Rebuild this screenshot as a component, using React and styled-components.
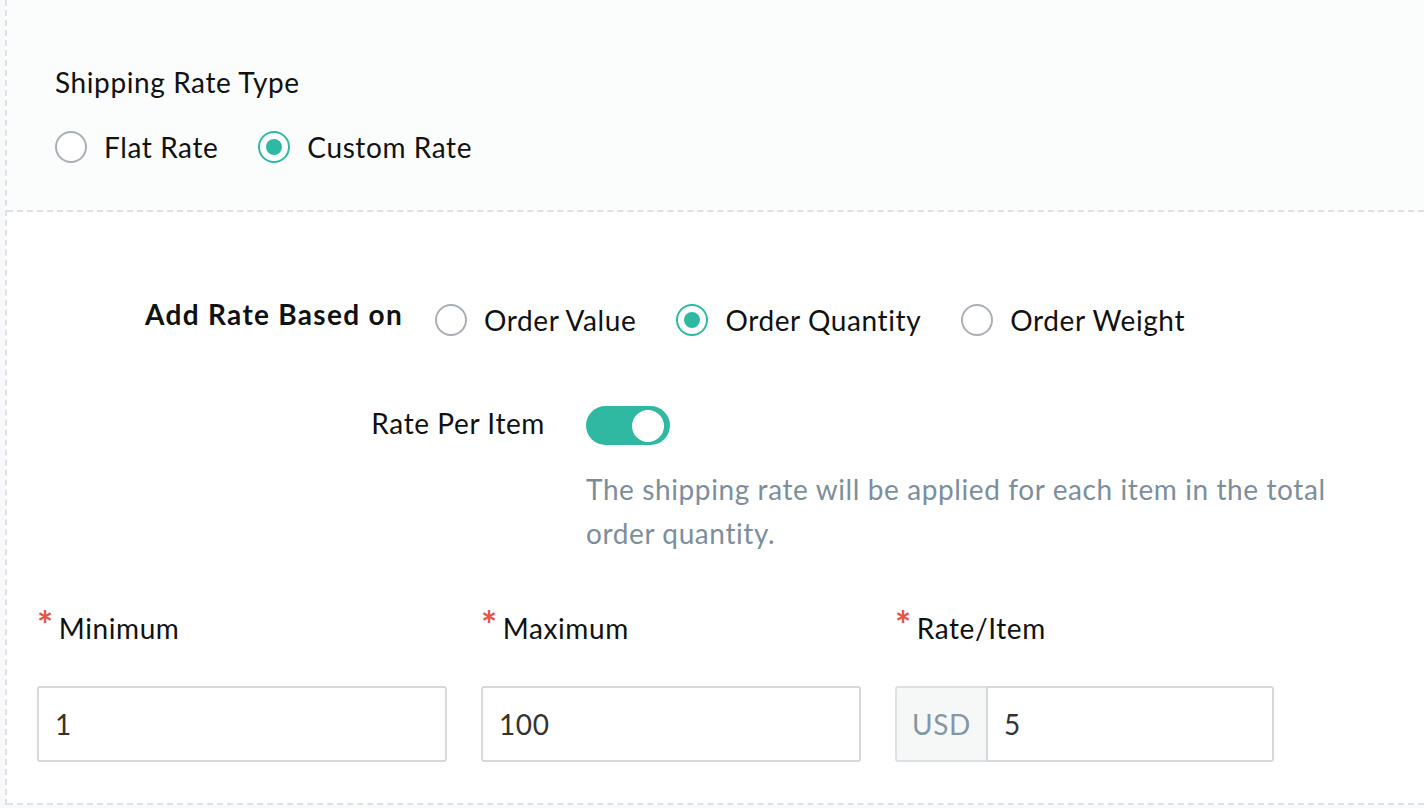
import React, { useState } from 'react'
import styled, { createGlobalStyle } from 'styled-components'

const GlobalStyle = createGlobalStyle`
  body {
    margin: 0;
    background: #f8f9fa;
    font-family: Lato, "Open Sans", sans-serif;
    letter-spacing: 0.6px;
    color: #111;
  }
`

const teal = '#2fb9a3'
const line = '#dde1e6'

const Frame = styled.div`
  margin-left: 5px;
  border-left: 2px dashed ${line};
  background: #fff;
`

const TypeSection = styled.section`
  background: #fbfdfc;
  padding: 62px 0 47px 48px;
  border-bottom: 2px dashed ${line};
`

const SectionTitle = styled.div`
  font-size: 28px;
  line-height: 40px;
  margin-bottom: 29px;
`

const RadioGroup = styled.div`
  display: flex;
  align-items: center;
  gap: ${p => p.$gap || 40}px;
`

const RadioLabel = styled.label`
  display: flex;
  align-items: center;
  gap: 17px;
  font-size: 28px;
  line-height: 32px;
  cursor: pointer;
`

const Circle = styled.span`
  width: 32px;
  height: 32px;
  box-sizing: border-box;
  border-radius: 50%;
  border: 2px solid ${p => (p.$on ? teal : '#a9aeb5')};
  background: #fff;
  display: flex;
  align-items: center;
  justify-content: center;
  &::after {
    content: '';
    width: 16px;
    height: 16px;
    border-radius: 50%;
    background: ${teal};
    display: ${p => (p.$on ? 'block' : 'none')};
  }
`

const RulesSection = styled.section`
  padding: 92px 0 41px 0;
  border-bottom: 2px dashed ${line};
`

const Row = styled.div`
  display: flex;
  align-items: flex-start;
  gap: ${p => p.$gap}px;
  margin-bottom: ${p => p.$mb || 0}px;
`

const RowLabel = styled.div`
  width: ${p => p.$w}px;
  flex: none;
  text-align: right;
  font-size: 28px;
  line-height: 34px;
  font-weight: ${p => (p.$bold ? 700 : 400)};
  letter-spacing: ${p => (p.$bold ? 1.3 : 0.6)}px;
  margin-top: ${p => p.$mt || 0}px;
`

const Column = styled.div`
  display: flex;
  flex-direction: column;
`

const Toggle = styled.button`
  width: 84px;
  height: 39px;
  border: none;
  border-radius: 20px;
  background: ${p => (p.$on ? teal : '#c8cdd2')};
  padding: 0;
  position: relative;
  cursor: pointer;
  &::after {
    content: '';
    position: absolute;
    top: 4px;
    left: ${p => (p.$on ? 46 : 6)}px;
    width: 32px;
    height: 32px;
    border-radius: 50%;
    background: #fff;
  }
`

const Hint = styled.p`
  margin: 22px 0 0;
  max-width: 770px;
  font-size: 28px;
  line-height: 44px;
  color: #7d8e9b;
`

const Fields = styled.div`
  display: flex;
  gap: 34px;
  padding-left: 30px;
  margin-top: 53px;
`

const Field = styled.div`
  display: flex;
  flex-direction: column;
  gap: 38px;
`

const FieldLabel = styled.div`
  display: flex;
  align-items: flex-start;
  gap: 5px;
  font-size: 28px;
  line-height: 40px;
  &::before {
    content: '*';
    color: #e5544b;
    font-size: 38px;
    font-weight: 700;
    line-height: 30px;
    margin-top: 1px;
  }
`

const InputWrap = styled.div`
  display: flex;
  width: ${p => p.$w}px;
  height: 76px;
`

const Addon = styled.div`
  width: 91px;
  box-sizing: border-box;
  display: flex;
  align-items: center;
  justify-content: center;
  background: #f6f8f8;
  border: 2px solid #dde1e5;
  border-right: none;
  border-radius: 3px 0 0 3px;
  color: #8597a5;
  font-size: 28px;
`

const Input = styled.input`
  flex: 1;
  min-width: 0;
  box-sizing: border-box;
  height: 100%;
  border: 2px solid #d5d9de;
  border-radius: ${p => (p.$addon ? '0 3px 3px 0' : '3px')};
  padding: 0 16px;
  font-family: inherit;
  letter-spacing: 0.6px;
  font-size: 28px;
  color: #333;
  outline: none;
  background: #fff;
`

function Radio({ checked, label, onChange }) {
  return (
    <RadioLabel onClick={onChange}>
      <Circle $on={checked} />
      {label}
    </RadioLabel>
  )
}

export default function App() {
  const [type, setType] = useState('custom')
  const [basis, setBasis] = useState('quantity')
  const [perItem, setPerItem] = useState(true)

  return (
    <>
      <GlobalStyle />
      <Frame>
        <TypeSection>
          <SectionTitle>Shipping Rate Type</SectionTitle>
          <RadioGroup $gap={40}>
            <Radio label="Flat Rate" checked={type === 'flat'} onChange={() => setType('flat')} />
            <Radio label="Custom Rate" checked={type === 'custom'} onChange={() => setType('custom')} />
          </RadioGroup>
        </TypeSection>

        <RulesSection>
          <Row $gap={32} $mb={70}>
            <RowLabel $w={396} $bold $mt={-7}>Add Rate Based on</RowLabel>
            <RadioGroup $gap={40}>
              <Radio label="Order Value" checked={basis === 'value'} onChange={() => setBasis('value')} />
              <Radio label="Order Quantity" checked={basis === 'quantity'} onChange={() => setBasis('quantity')} />
              <Radio label="Order Weight" checked={basis === 'weight'} onChange={() => setBasis('weight')} />
            </RadioGroup>
          </Row>

          <Row $gap={41}>
            <RowLabel $w={538} $mt={0}>Rate Per Item</RowLabel>
            <Column>
              <Toggle $on={perItem} onClick={() => setPerItem(!perItem)} aria-label="Rate Per Item" />
              <Hint>The shipping rate will be applied for each item in the total order quantity.</Hint>
            </Column>
          </Row>

          <Fields>
            <Field>
              <FieldLabel>Minimum</FieldLabel>
              <InputWrap $w={410}>
                <Input defaultValue="1" />
              </InputWrap>
            </Field>
            <Field>
              <FieldLabel>Maximum</FieldLabel>
              <InputWrap $w={380}>
                <Input defaultValue="100" />
              </InputWrap>
            </Field>
            <Field>
              <FieldLabel>Rate/Item</FieldLabel>
              <InputWrap $w={379}>
                <Addon>USD</Addon>
                <Input $addon defaultValue="5" />
              </InputWrap>
            </Field>
          </Fields>
        </RulesSection>
      </Frame>
    </>
  )
}
